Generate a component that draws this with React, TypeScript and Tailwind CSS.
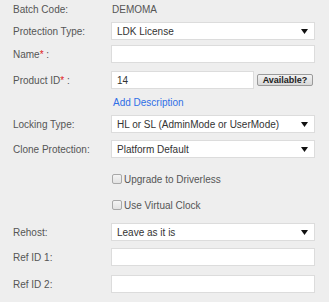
import React from "react";

const font = { fontFamily: '"Liberation Sans", Arial, sans-serif' };

function Arrow() {
  return (
    <svg width="7" height="5" viewBox="0 0 7 5" className="shrink-0">
      <path d="M0 0 H7 L3.5 5 Z" fill="#111" />
    </svg>
  );
}

function Select({ value }: { value: string }) {
  return (
    <div className="flex h-[18px] w-[204px] items-center justify-between border border-[#dcdcdc] bg-white pl-[5px] pr-[6px] text-[10px] text-[#333]">
      <span>{value}</span>
      <Arrow />
    </div>
  );
}

function Input({ value = "", w = "w-[204px]" }: { value?: string; w?: string }) {
  return (
    <div className={`flex h-[18px] ${w} items-center border border-[#dcdcdc] bg-white pl-[5px] text-[10px] text-[#333]`}>
      {value}
    </div>
  );
}

function Label({ children }: { children: React.ReactNode }) {
  return <div className="w-[98px] shrink-0 text-[10px] text-[#555]">{children}</div>;
}

function Checkbox({ label }: { label: string }) {
  return (
    <div className="flex h-[18px] items-center pl-[98px]">
      <span className="ml-px mr-[2px] block h-[10px] w-[10px] rounded-[2px] border border-[#a8a8a8] bg-gradient-to-b from-[#f4f4f4] to-[#e2e2e2]" />
      <span className="text-[10px] text-[#555]">{label}</span>
    </div>
  );
}

export default function App() {
  return (
    <div className="h-[302px] w-[329px] bg-[#eeeeee] pl-[13px]" style={font}>
      <div className="flex flex-col">
        <div className="flex h-[18px] items-center">
          <Label>Batch Code:</Label>
          <span className="pl-px text-[10px] text-[#555]">DEMOMA</span>
        </div>
        <div className="mt-[4px] flex h-[18px] items-center">
          <Label>Protection Type:</Label>
          <Select value="LDK License" />
        </div>
        <div className="mt-[5px] flex h-[18px] items-center">
          <Label>
            Name<span className="text-[#e02020]">*</span> :
          </Label>
          <Input />
        </div>
        <div className="mt-[8px] flex h-[18px] items-center">
          <Label>
            Product ID<span className="text-[#e02020]">*</span> :
          </Label>
          <Input value="14" w="w-[143px]" />
          <button className="ml-[3px] h-[12px] w-[56px] rounded-[2px] border border-[#9a9a9a] bg-gradient-to-b from-[#f2f2f2] to-[#d8d8d8] text-[9px] font-bold leading-[10px] text-[#222]">
            Available?
          </button>
        </div>
        <div className="mt-[5px] flex h-[16px] items-center pl-[100px] text-[10px] text-[#2f6fe6]">
          Add Description
        </div>
        <div className="mt-[5px] flex h-[18px] items-center">
          <Label>Locking Type:</Label>
          <Select value="HL or SL (AdminMode or UserMode)" />
        </div>
        <div className="mt-[7px] flex h-[18px] items-center">
          <Label>Clone Protection:</Label>
          <Select value="Platform Default" />
        </div>
        <div className="mt-[12px]">
          <Checkbox label="Upgrade to Driverless" />
        </div>
        <div className="mt-[8px]">
          <Checkbox label="Use Virtual Clock" />
        </div>
        <div className="mt-[9px] flex h-[18px] items-center">
          <Label>Rehost:</Label>
          <Select value="Leave as it is" />
        </div>
        <div className="mt-[7px] flex h-[18px] items-center">
          <Label>Ref ID 1:</Label>
          <Input />
        </div>
        <div className="mt-[9px] flex h-[18px] items-center">
          <Label>Ref ID 2:</Label>
          <Input />
        </div>
      </div>
    </div>
  );
}
